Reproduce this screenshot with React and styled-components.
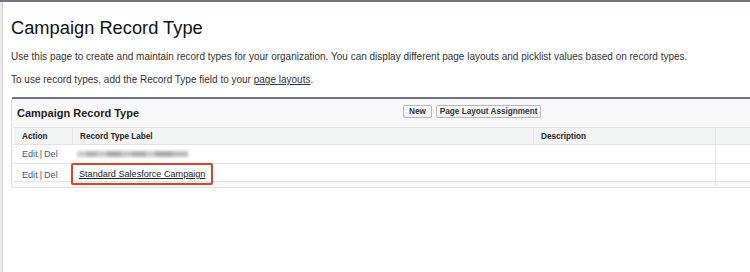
import styled, { createGlobalStyle } from 'styled-components'

const GlobalStyle = createGlobalStyle`
  html, body {
    margin: 0;
    padding: 0;
    background: #ececec;
  }
  body {
    font-family: "Liberation Sans", Arial, Helvetica, sans-serif;
    overflow: hidden;
  }
`

const Frame = styled.div`
  width: 750px;
  height: 272px;
  overflow: hidden;
  box-sizing: border-box;
  border-top: 2px solid #6f7586;
  display: flex;
`

const Page = styled.main`
  flex: 1;
  margin-left: 2px;
  border-left: 1px solid #cfcfcf;
  background: #fff;
  padding: 16px 0 0 8px;
  min-width: 0;
`

const Title = styled.h1`
  margin: 0;
  font-size: 18.3px;
  line-height: 20px;
  font-weight: normal;
  color: #111;
`

const Intro = styled.p`
  margin: ${(p) => p.$gap}px 0 0;
  font-size: 10px;
  line-height: 12px;
  color: #333;
  white-space: nowrap;
`

const TextLink = styled.a`
  color: #333;
  text-decoration: underline;
`

const Panel = styled.section`
  margin-top: 11px;
  width: 770px;
  background: #f8f8f8;
  border: 1px solid #e0e0e0;
  border-top: 2px solid #6e7384;
  border-radius: 3px 0 0 3px;
  padding: 0 0 5px 2px;
`

const PanelHead = styled.div`
  height: 28px;
  display: flex;
  align-items: center;
`

const PanelTitle = styled.h2`
  margin: 0;
  width: 386px;
  padding-left: 3px;
  font-size: 11px;
  font-weight: bold;
  color: #222;
`

const Buttons = styled.div`
  display: flex;
  gap: 4px;
  margin-top: -4px;
`

const Button = styled.button`
  height: 13px;
  padding: 0 ${(p) => (p.$wide ? 5 : 3)}px;
  font-family: inherit;
  font-size: 8.2px;
  font-weight: bold;
  line-height: 11px;
  color: #333;
  background: linear-gradient(#ffffff, #f0f0f0);
  border: 1px solid #b8b8b8;
  border-radius: 2px;
`

const Row = styled.div`
  display: grid;
  grid-template-columns: 58px 461px 182px 1fr;
  box-sizing: border-box;
  height: ${(p) => p.$h}px;
  align-items: center;
  background: ${(p) => (p.$head ? '#f2f3f3' : '#fff')};
  border-top: ${(p) => (p.$head ? '1px solid #e0e3e5' : 'none')};
  border-bottom: 1px solid #e3e3e3;
  font-size: ${(p) => (p.$head ? '8.2px' : '9.1px')};
  font-weight: ${(p) => (p.$head ? 'bold' : 'normal')};
  color: #222;
`

const Cell = styled.div`
  height: 100%;
  display: flex;
  align-items: center;
  padding-left: 7px;
  box-sizing: border-box;
  border-left: 1px solid ${(p) => (p.$line ? '#e4e4e4' : 'transparent')};
  white-space: nowrap;
`

const ActionLink = styled.a`
  color: #44587e;
  text-decoration: none;
`

const Pipe = styled.span`
  color: #555;
  margin: 0 2px;
`

const Blurred = styled.span`
  display: block;
  width: 111px;
  height: 6px;
  margin-left: -3px;
  background: linear-gradient(
    90deg,
    #cdcdcd 0 8%,
    #b4b4b4 8% 18%,
    #c8c8c8 18% 27%,
    #aaaaaa 27% 40%,
    #c4c4c4 40% 50%,
    #afafaf 50% 62%,
    #cacaca 62% 70%,
    #a9a9a9 70% 86%,
    #bdbdbd 86% 100%
  );
  filter: blur(1.6px);
`

const Highlight = styled.span`
  margin: -1px 0 0 -9px;
  padding: 4px 6px;
  border: 2px solid #d7432b;
  border-radius: 2px;
`

const RecordLink = styled.a`
  color: #222;
  text-decoration: underline;
`

function Actions() {
  return (
    <>
      <ActionLink href="#">Edit</ActionLink>
      <Pipe>|</Pipe>
      <ActionLink href="#">Del</ActionLink>
    </>
  )
}

export default function App() {
  return (
    <>
      <GlobalStyle />
      <Frame>
        <Page>
          <Title>Campaign Record Type</Title>
          <Intro $gap={13}>
            Use this page to create and maintain record types for your organization. You can display different page layouts and picklist values based on record types.
          </Intro>
          <Intro $gap={11}>
            To use record types, add the Record Type field to your <TextLink href="#">page layouts</TextLink>.
          </Intro>
          <Panel>
            <PanelHead>
              <PanelTitle>Campaign Record Type</PanelTitle>
              <Buttons>
                <Button $wide>New</Button>
                <Button>Page Layout Assignment</Button>
              </Buttons>
            </PanelHead>
            <Row $head $h={18}>
              <Cell>Action</Cell>
              <Cell $line>Record Type Label</Cell>
              <Cell $line>Description</Cell>
              <Cell $line />
            </Row>
            <Row $h={19}>
              <Cell><Actions /></Cell>
              <Cell><Blurred /></Cell>
              <Cell />
              <Cell $line />
            </Row>
            <Row $h={18}>
              <Cell><Actions /></Cell>
              <Cell>
                <Highlight>
                  <RecordLink href="#">Standard Salesforce Campaign</RecordLink>
                </Highlight>
              </Cell>
              <Cell />
              <Cell $line />
            </Row>
          </Panel>
        </Page>
      </Frame>
    </>
  )
}
